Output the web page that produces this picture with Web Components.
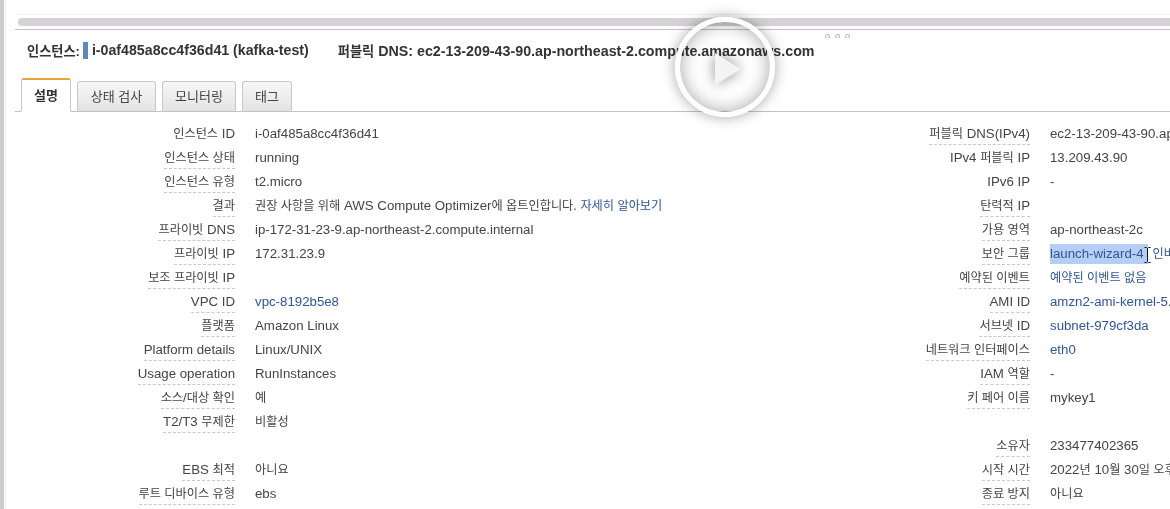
<!DOCTYPE html>
<html lang="ko">
<head>
<meta charset="utf-8">
<title>EC2 인스턴스 설명</title>
<style>
  html, body { margin: 0; height: 509px; overflow: hidden; background: #fff; }
  body { font: 13.25px "Liberation Sans", "Noto Sans CJK KR", sans-serif; color: #444; }
</style>
</head>
<body>
<console-frame>
  <scroll-strip></scroll-strip>
  <instance-header instance="i-0af485a8cc4f36d41 (kafka-test)" dns="ec2-13-209-43-90.ap-northeast-2.compute.amazonaws.com"></instance-header>
  <tab-bar>
    <tab-item active style="width:50px">설명</tab-item>
    <tab-item style="width:79px">상태 검사</tab-item>
    <tab-item style="width:74px">모니터링</tab-item>
    <tab-item style="width:50px">태그</tab-item>
  </tab-bar>
  <detail-grid>
    <detail-column slot="left" style="--label-width:220px">
      <detail-row label="인스턴스 ID" plain>i-0af485a8cc4f36d41</detail-row>
      <detail-row label="인스턴스 상태">running</detail-row>
      <detail-row label="인스턴스 유형">t2.micro</detail-row>
      <detail-row label="결과"><ko-text>권장 사항을 위해</ko-text> AWS Compute Optimizer<ko-text>에 옵트인합니다.</ko-text> <detail-link><ko-text>자세히 알아보기</ko-text></detail-link></detail-row>
      <detail-row label="프라이빗 DNS">ip-172-31-23-9.ap-northeast-2.compute.internal</detail-row>
      <detail-row label="프라이빗 IP">172.31.23.9</detail-row>
      <detail-row label="보조 프라이빗 IP"></detail-row>
      <detail-row label="VPC ID"><detail-link>vpc-8192b5e8</detail-link></detail-row>
      <detail-row label="플랫폼">Amazon Linux</detail-row>
      <detail-row label="Platform details">Linux/UNIX</detail-row>
      <detail-row label="Usage operation">RunInstances</detail-row>
      <detail-row label="소스/대상 확인"><ko-text>예</ko-text></detail-row>
      <detail-row label="T2/T3 무제한"><ko-text>비활성</ko-text></detail-row>
      <detail-row></detail-row>
      <detail-row label="EBS 최적"><ko-text>아니요</ko-text></detail-row>
      <detail-row label="루트 디바이스 유형">ebs</detail-row>
    </detail-column>
    <detail-column slot="right" style="--label-width:215px">
      <detail-row label="퍼블릭 DNS(IPv4)">ec2-13-209-43-90.ap-northeast-2.compute.amazonaws.com</detail-row>
      <detail-row label="IPv4 퍼블릭 IP" plain>13.209.43.90</detail-row>
      <detail-row label="IPv6 IP" plain>-</detail-row>
      <detail-row label="탄력적 IP"></detail-row>
      <detail-row label="가용 영역">ap-northeast-2c</detail-row>
      <detail-row label="보안 그룹"><detail-link selected>launch-wizard-4</detail-link><detail-link><ko-text>인바</ko-text></detail-link></detail-row>
      <detail-row label="예약된 이벤트"><detail-link><ko-text>예약된 이벤트 없음</ko-text></detail-link></detail-row>
      <detail-row label="AMI ID"><detail-link>amzn2-ami-kernel-5.</detail-link></detail-row>
      <detail-row label="서브넷 ID"><detail-link>subnet-979cf3da</detail-link></detail-row>
      <detail-row label="네트워크 인터페이스"><detail-link>eth0</detail-link></detail-row>
      <detail-row label="IAM 역할">-</detail-row>
      <detail-row label="키 페어 이름">mykey1</detail-row>
      <detail-row></detail-row>
      <detail-row label="소유자">233477402365</detail-row>
      <detail-row label="시작 시간">2022<ko-text>년</ko-text> 10<ko-text>월</ko-text> 30<ko-text>일 오후</ko-text></detail-row>
      <detail-row label="종료 방지"><ko-text>아니요</ko-text></detail-row>
    </detail-column>
  </detail-grid>
</console-frame>
<play-overlay></play-overlay>
<text-cursor></text-cursor>

<script>
  const define = (name, html, init) => {
    const template = document.createElement("template");
    // strip whitespace between tags, or it renders as spaces round the slot in inline hosts
    template.innerHTML = html.trim().replace(/>\s+</g, "><");
    customElements.define(name, class extends HTMLElement {
      constructor() {
        super();
        this.attachShadow({ mode: "open" }).appendChild(template.content.cloneNode(true));
      }
      connectedCallback() {
        if (init) init(this, this.shadowRoot);
      }
    });
  };

  // hangul runs are set smaller than latin, the reference font is like that
  const markHangul = (text) => (text || "").replace(/[가-힣]+(?: [가-힣]+)*/g, "<ko-text>$&</ko-text>");

  define("ko-text", `
<style>
  :host { font-size: 12.2px; }
</style>
<slot></slot>
`);

  define("console-frame", `
<style>
  :host { display: block; height: 509px; overflow: hidden; background: linear-gradient(90deg, #cbcbcb 0, #cbcbcb 4px, #fafafa 4px, #fafafa 5px, #ececec 5px, #ececec 6px, #fff 6px); padding-left: 15px; box-sizing: border-box; filter: blur(.3px); }
</style>
<slot></slot>
`);

  define("scroll-strip", `
<style>
  :host { display: block; height: 30px; padding-top: 14px; box-sizing: border-box; border-bottom: 1px solid #c4c2c4; }
  .edge { height: 1px; background: #f0eff0; margin-bottom: 3px; }
  .thumb { height: 8px; margin-left: 3px; background: #d4d2d4; border-radius: 4px 0 0 4px; }
</style>
<div class="edge"></div>
<div class="thumb"></div>
`);

  define("instance-header", `
<style>
  :host { display: block; }
  .grip { display: flex; gap: 5px; height: 8px; padding: 4px 0 0 810px; box-sizing: border-box; }
  .grip i { width: 5px; height: 4px; border: 1px solid #bbb; border-bottom-color: #ddd; border-radius: 3px 3px 0 0; box-sizing: border-box; }
  .line { display: flex; align-items: center; height: 24px; padding-left: 12px; font-weight: bold; font-size: 14.2px; color: #333; white-space: nowrap; }
  .marker { width: 5px; height: 17px; margin: 0 4px 0 3px; background: #5f87b9; }
  .dns { margin-left: 29px; font-size: 14.25px; }
  ko-text { font-size: 13.2px; }
</style>
<div class="grip"><i></i><i></i><i></i></div>
<div class="line"><span><ko-text>인스턴스:</ko-text></span><span class="marker"></span><span class="id"></span><span class="dns"></span></div>
`, (el, root) => {
    root.querySelector(".id").textContent = el.getAttribute("instance");
    root.querySelector(".dns").innerHTML = "<ko-text>퍼블릭</ko-text> DNS: " + el.getAttribute("dns");
  });

  define("tab-bar", `
<style>
  :host { display: flex; align-items: flex-end; gap: 6px; height: 34px; margin-top: 15px; padding-left: 6px; border-bottom: 1px solid #c2c2c2; }
</style>
<slot></slot>
`);

  define("tab-item", `
<style>
  :host { display: block; height: 31px; margin-bottom: -1px; box-sizing: border-box; text-align: center; line-height: 30px; font-size: 13px; color: #444; white-space: nowrap; border: 1px solid #c8c8c8; border-bottom-color: #c2c2c2; border-radius: 3px 3px 0 0; background: linear-gradient(#f7f7f7, #e3e3e3); }
  :host([active]) { height: 34px; line-height: 31px; font-weight: bold; color: #333; border-top: 2px solid #e8a33d; border-bottom-color: #fff; background: #fff; }
</style>
<slot></slot>
`);

  define("detail-grid", `
<style>
  :host { display: grid; grid-template-columns: 800px 1fr; padding-top: 9px; }
</style>
<slot name="left"></slot>
<slot name="right"></slot>
`);

  define("detail-column", `
<style>
  :host { display: block; min-width: 0; }
</style>
<slot></slot>
`);

  define("detail-row", `
<style>
  :host { display: grid; grid-template-columns: var(--label-width) 1fr; column-gap: 20px; height: 24px; white-space: nowrap; }
  .label { justify-self: end; height: 24px; padding-top: 2px; line-height: 21px; box-sizing: border-box; color: #444; }
  .label.dashed { border-bottom: 1px dashed #c9c9c9; }
  .value { padding-top: 2px; line-height: 21px; color: #444; overflow: hidden; }
</style>
<span class="label"></span>
<span class="value"><slot></slot></span>
`, (el, root) => {
    const label = root.querySelector(".label");
    const text = el.getAttribute("label");
    label.innerHTML = markHangul(text);
    if (text && !el.hasAttribute("plain")) label.classList.add("dashed");
  });

  define("detail-link", `
<style>
  :host { color: #2f5597; }
  :host([selected]) { display: inline-block; line-height: 20px; padding-right: 4px; margin-right: 5px; background: #b5cff2; }
</style>
<slot></slot>
`);

  define("play-overlay", `
<style>
  :host { position: absolute; left: 675px; top: 17px; width: 100px; height: 100px; box-sizing: border-box; border: 5px solid #fff; border-radius: 50%; box-shadow: 0 0 14px rgba(0,0,0,.35), inset 0 0 18px rgba(0,0,0,.35); }
  svg { position: absolute; left: 35px; top: 31px; overflow: visible; filter: drop-shadow(0 0 7px rgba(0,0,0,.45)); }
</style>
<svg width="26" height="32" viewBox="0 0 26 32"><path d="M0 0 26 16 0 32Z" fill="#f4f4f4"/></svg>
`);

  define("text-cursor", `
<style>
  :host { position: absolute; left: 1144px; top: 247px; width: 7px; height: 16px; }
  svg { display: block; }
</style>
<svg width="7" height="16" viewBox="0 0 7 16" fill="none" stroke="#111" stroke-width="1"><path d="M.5 .5H2.5L3.5 1.5 4.5 .5H6.5M3.5 1.5V14.5M.5 15.5H2.5L3.5 14.5 4.5 15.5H6.5"/></svg>
`);
</script>
</body>
</html>
